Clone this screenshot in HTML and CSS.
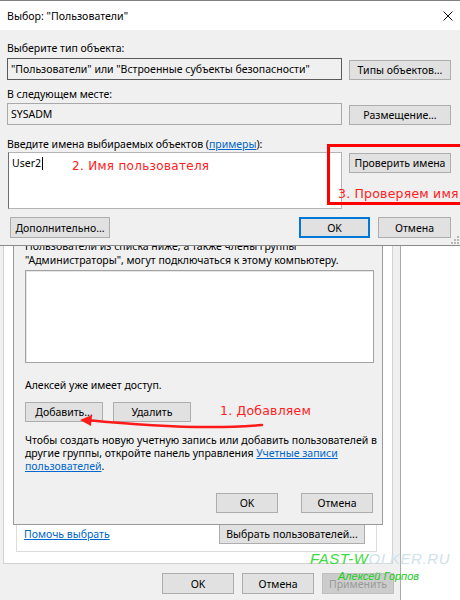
FILE: index.html
```html
<!DOCTYPE html>
<html lang="ru">
<head>
<meta charset="utf-8">
<title>Выбор: Пользователи</title>
<link rel="stylesheet" href="styles.css">
</head>
<body>
<div class="desk">

  <div class="win props">
    <div class="tabpage">
      <div class="groupbox">
        <div class="gb-row">
          <span class="link">Помочь выбрать</span>
          <button class="btn w146">Выбрать пользователей...</button>
        </div>
      </div>
    </div>
    <div class="footer">
      <button class="btn w72">OK</button>
      <button class="btn w72">Отмена</button>
      <button class="btn w72 disabled">Применить</button>
    </div>
  </div>

  <div class="win rdp">
    <p class="txt intro">Пользователи из списка ниже, а также члены группы<br>"Администраторы", могут подключаться к этому компьютеру.</p>
    <div class="listbox"></div>
    <p class="txt access">Алексей уже имеет доступ.</p>
    <div class="row-btns">
      <button class="btn w78">Добавить...</button>
      <button class="btn w78">Удалить</button>
    </div>
    <p class="txt para">Чтобы создать новую учетную запись или добавить пользователей в<br>другие группы, откройте панель управления <span class="link">Учетные записи</span><br><span class="link">пользователей</span>.</p>
    <div class="dlg-footer">
      <button class="btn w62">OK</button>
      <button class="btn w72">Отмена</button>
    </div>
  </div>

  <div class="win select">
    <div class="titlebar">
      <span>Выбор: "Пользователи"</span>
      <svg class="close" width="10" height="10" viewBox="0 0 10 10"><path d="M0.5 0.5 L9.5 9.5 M9.5 0.5 L0.5 9.5" stroke="#111" stroke-width="1" fill="none"/></svg>
    </div>
    <div class="sel-body">
      <div class="label">Выберите тип объекта:</div>
      <div class="field-row r1">
        <div class="textbox dark">"Пользователи" или "Встроенные субъекты безопасности"</div>
        <button class="btn side">Типы объектов...</button>
      </div>
      <div class="label l2">В следующем месте:</div>
      <div class="field-row r2">
        <div class="textbox light">SYSADM</div>
        <button class="btn side">Размещение...</button>
      </div>
      <div class="label l3">Введите имена выбираемых объектов (<span class="link">примеры</span>):</div>
      <div class="field-row r3">
        <div class="textarea">User2<span class="caret"></span></div>
        <button class="btn side top">Проверить имена</button>
      </div>
      <div class="bottom-row">
        <button class="btn w100">Дополнительно...</button>
        <button class="btn w71 default">OK</button>
        <button class="btn w73">Отмена</button>
      </div>
    </div>
    <svg class="grip" width="9" height="9" viewBox="0 0 9 9"><g fill="#b9b9b9"><rect x="7" y="1" width="2" height="2"/><rect x="4" y="4" width="2" height="2"/><rect x="7" y="4" width="2" height="2"/><rect x="1" y="7" width="2" height="2"/><rect x="4" y="7" width="2" height="2"/><rect x="7" y="7" width="2" height="2"/></g></svg>
  </div>

  <div class="anno-rect"></div>
  <div class="anno a2">2. Имя пользователя</div>
  <div class="anno a3">3. Проверяем имя</div>
  <div class="anno a1">1. Добавляем</div>
  <svg class="arrow" width="195" height="30" viewBox="0 0 195 30">
    <path d="M187 20 Q120 26 12 15" stroke="#ff1a1a" stroke-width="2.5" fill="none" stroke-linecap="round"/>
    <path d="M5 15 L17 10 L16 21 Z" fill="#ff1a1a"/>
  </svg>
  <div class="wm"><span class="wm-g">FAST-W</span><span class="wm-b">OLKER.RU</span></div>
  <div class="wm2">Алексей Горпов</div>
</div>
</body>
</html>
```

FILE: styles.css
```css
* { box-sizing: border-box; }
html, body { margin: 0; padding: 0; }
body {
  background: #fff;
  font-family: "Noto Sans", "Open Sans", sans-serif;
  font-size: 10.5px;
  color: #000;
}
.desk { position: relative; width: 460px; height: 600px; overflow: hidden; background: #fff; }
.win { position: absolute; background: #f0f0f0; }

.btn {
  font: inherit;
  color: #000;
  background: #e1e1e1;
  border: 1px solid #adadad;
  height: 20px;
  padding: 0;
  display: flex;
  align-items: center;
  justify-content: center;
  flex: none;
  white-space: nowrap;
}
.w62 { width: 62px; }
.w71 { width: 71px; }
.w72 { width: 72px; }
.w73 { width: 73px; }
.w78 { width: 78px; }
.w100 { width: 100px; }
.w146 { width: 146px; }
.btn.disabled { background: #cccccc; border-color: #bfbfbf; color: #9a9a9a; }
.btn.default { border-color: #0078d7; box-shadow: inset 0 0 0 1px #0078d7; }
.link { color: #0066cc; text-decoration: underline; }

/* back window: system properties */
.props {
  left: 0; top: 0; width: 401px; height: 600px;
  border-right: 1px solid #ababab;
  display: flex; flex-direction: column;
}
.tabpage {
  margin-left: 3px; width: 390px; height: 564px; flex: none;
  background: #fff;
  border: 1px solid #d2d2d2; border-top: none;
  display: flex; flex-direction: column;
  padding: 0 15px 11px 12px;
}
.groupbox {
  flex: 1;
  border: 1px solid #dcdcdc; border-top: none;
  display: flex; align-items: flex-end;
}
.gb-row {
  flex: 1;
  display: flex; align-items: center; justify-content: space-between;
  padding: 0 11px 7px 7px;
}
.footer {
  display: flex; justify-content: flex-end; gap: 8px;
  padding: 9px 6px 0 0;
}
.footer .btn { height: 21px; }

/* middle dialog */
.rdp {
  left: 13px; top: 180px; width: 370px; height: 345px;
  border: 1px solid #9a9a9a;
  display: flex; flex-direction: column; justify-content: flex-end;
  padding: 0 8px 11px 11px;
}
.txt { margin: 0; line-height: 13px; white-space: nowrap; }
.intro { margin-bottom: 3px; line-height: 14px; }
.listbox {
  height: 93px; background: #fff;
  border: 1px solid #a3a3a3;
  box-shadow: inset 1px 1px 0 #e6e6e6;
  margin-bottom: 16px;
}
.access { margin-bottom: 10px; }
.row-btns { display: flex; gap: 10px; margin-bottom: 12px; }
.para { margin-bottom: 20px; }
.dlg-footer { display: flex; justify-content: flex-end; gap: 23px; padding-right: 1px; }

/* top dialog */
.select {
  left: 0; top: 0; width: 460px; height: 246px;
  border-top: 1px solid #808080; border-bottom: 1px solid #8a8a8a;
}
.titlebar {
  height: 29px; background: #fff;
  display: flex; align-items: center; justify-content: space-between;
  padding: 1px 7px 0 7px;
  font-size: 10.6px;
}
.sel-body { padding: 10px 9px 0 7px; }
.label { line-height: 16px; height: 16px; white-space: nowrap; }
.l2 { margin-top: 6px; }
.l3 { margin-top: 11px; }
.field-row { display: flex; align-items: flex-end; gap: 7px; }
.r1 { margin-top: 2px; }
.r2 { margin-top: 1px; }
.r3 { align-items: flex-start; }
.textbox {
  width: 335px; height: 22px;
  border: 1px solid #7a7a7a;
  padding: 0 3px;
  display: flex; align-items: center;
  white-space: nowrap;
}
.textbox.dark { border-color: #5a5a5a; }
.textbox.light { border-color: #a9a9a9; }
.side { width: 102px; }
.side.top { margin-top: 1px; }
.textarea {
  width: 334px; height: 57px; margin-left: 1px;
  background: #fff;
  border: 1px solid #b4b4b4; border-left-color: #6f6f6f;
  padding: 2px 3px;
  line-height: 16px;
  display: flex; align-items: flex-start;
}
.caret { display: inline-block; width: 1px; height: 13px; background: #000; margin: 2px 0 0 1px; }
.bottom-row { display: flex; gap: 8px; margin-top: 8px; }
.bottom-row .btn { height: 21px; }
.bottom-row .w100 { margin-left: 3px; margin-right: auto; }
.grip { position: absolute; right: 1px; bottom: 1px; }

/* annotations */
.anno-rect {
  position: absolute; left: 327px; top: 144px; width: 150px; height: 61px;
  border: 3px solid #ff0000;
}
.anno {
  position: absolute;
  color: #ff2020;
  font-family: "DejaVu Sans", sans-serif;
  font-size: 12px;
  line-height: 15px;
  white-space: nowrap;
  letter-spacing: 0.3px;
}
.a2 { left: 72px; top: 159px; }
.a3 { left: 338px; top: 186px; font-size: 12.5px; letter-spacing: 0.2px; }
.a1 { left: 220px; top: 403px; font-size: 12.5px; letter-spacing: 0.2px; }
.arrow { position: absolute; left: 75px; top: 405px; }
.wm {
  position: absolute; left: 310px; top: 550px;
  font-family: "Liberation Sans", sans-serif;
  font-style: italic;
  font-size: 15px; line-height: 18px;
  letter-spacing: 0.6px;
  white-space: nowrap;
}
.wm-g { color: #3ddc3d; }
.wm-b { color: #cfe2ea; }
.wm2 {
  position: absolute; left: 338px; top: 569px;
  font-family: "Liberation Sans", sans-serif;
  font-style: italic;
  font-size: 11px; line-height: 14px;
  color: #22cc22;
  white-space: nowrap;
}
```
